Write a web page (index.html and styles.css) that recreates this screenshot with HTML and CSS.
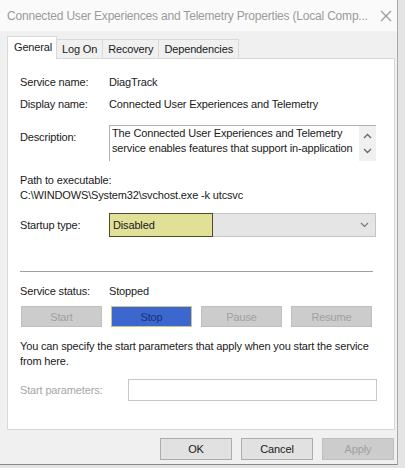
FILE: index.html
```html
<!DOCTYPE html>
<html lang="en">
<head>
  <meta charset="UTF-8">
  <title>Connected User Experiences and Telemetry Properties</title>
  <link rel="stylesheet" href="styles.css">
</head>
<body>
  <div class="window">
    <div class="titlebar">
      <span class="title">Connected User Experiences and Telemetry Properties (Local Comp...</span>
      <span class="close">
        <svg width="12" height="12" viewBox="0 0 12 12"><path d="M1 1L11 11M11 1L1 11" stroke="#9a9a9a" stroke-width="1.2" fill="none"/></svg>
      </span>
    </div>

    <div class="content">
      <div class="tabs">
        <div class="tab active">General</div>
        <div class="tab">Log On</div>
        <div class="tab">Recovery</div>
        <div class="tab">Dependencies</div>
      </div>

      <div class="panel">
        <div class="row first">
          <span class="label">Service name:</span>
          <span>DiagTrack</span>
        </div>
        <div class="row second">
          <span class="label">Display name:</span>
          <span>Connected User Experiences and Telemetry</span>
        </div>
        <div class="row desc-row">
          <span class="label desc-label">Description:</span>
          <div class="desc-box">
            <div class="desc-text">The Connected User Experiences and Telemetry service enables features that support in-application</div>
            <div class="scroll">
              <svg width="9" height="6" viewBox="0 0 9 6"><path d="M1 5L4.5 1.5L8 5" stroke="#666" stroke-width="1.3" fill="none"/></svg>
              <svg width="9" height="6" viewBox="0 0 9 6"><path d="M1 1L4.5 4.5L8 1" stroke="#666" stroke-width="1.3" fill="none"/></svg>
            </div>
          </div>
        </div>

        <div class="path-block">
          <div>Path to executable:</div>
          <div>C:\WINDOWS\System32\svchost.exe -k utcsvc</div>
        </div>

        <div class="row startup-row">
          <span class="label">Startup type:</span>
          <div class="select">
            <span class="select-value">Disabled</span>
            <svg class="chevron" width="9" height="6" viewBox="0 0 9 6"><path d="M1 1L4.5 4.5L8 1" stroke="#777" stroke-width="1.1" fill="none"/></svg>
          </div>
        </div>

        <div class="separator"></div>

        <div class="row status-row">
          <span class="label">Service status:</span>
          <span>Stopped</span>
        </div>

        <div class="service-buttons">
          <button type="button" class="btn disabled">Start</button>
          <button type="button" class="btn stop">Stop</button>
          <button type="button" class="btn disabled">Pause</button>
          <button type="button" class="btn disabled">Resume</button>
        </div>

        <p class="hint">You can specify the start parameters that apply when you start the service from here.</p>

        <div class="row params-row">
          <span class="label params-label">Start parameters:</span>
          <div class="params-input"></div>
        </div>
      </div>

      <div class="footer">
        <button type="button" class="btn dlg">OK</button>
        <button type="button" class="btn dlg">Cancel</button>
        <button type="button" class="btn dlg disabled">Apply</button>
      </div>
    </div>
  </div>
</body>
</html>
```

FILE: styles.css
```css
body {
  margin: 0;
  background-color: #e4e4e4;
  font-family: "Liberation Sans", Arial, sans-serif;
  font-size: 11px;
  letter-spacing: -0.15px;
  color: #1a1a1a;
}
.window {
  width: 398px;
  height: 465px;
  border-right: 1px solid #a8a8a8;
  border-bottom: 1px solid #8a8a8a;
  background-color: #f0f0f0;
  box-sizing: border-box;
}
.titlebar {
  height: 31px;
  background-color: #fafafa;
  display: flex;
  align-items: center;
  justify-content: space-between;
  padding: 0 5px 0 7px;
}
.title {
  color: #9a9a9a;
  font-size: 12px;
  letter-spacing: -0.2px;
  white-space: nowrap;
}
.close {
  display: flex;
}
.content {
  padding: 5px 0 0 7px;
}
.tabs {
  display: flex;
  align-items: flex-end;
  height: 22px;
  position: relative;
  z-index: 1;
}
.tab {
  height: 19px;
  line-height: 19px;
  padding: 0 5px;
  border: 1px solid #d9d9d9;
  border-bottom: none;
  margin-left: -1px;
  background-color: #f0f0f0;
  box-sizing: border-box;
}
.tab.active {
  height: 23px;
  line-height: 20px;
  background-color: #fff;
  margin-left: 0;
  margin-bottom: -1px;
  padding: 0 6px;
  width: 50px;
}
.panel {
  width: 388px;
  height: 372px;
  background-color: #fff;
  border: 1px solid #d9d9d9;
  box-sizing: border-box;
  padding: 15px 0 0 12px;
}
.row {
  display: flex;
  align-items: flex-start;
  line-height: 16px;
}
.label {
  width: 89px;
  flex-shrink: 0;
}
.second {
  margin-top: 6px;
}
.desc-row {
  margin-top: 13px;
}
.desc-label {
  padding-top: 4px;
}
.desc-box {
  width: 267px;
  height: 36px;
  border-top: 1px solid #b0b0b0;
  border-left: 1px solid #b0b0b0;
  display: flex;
  box-sizing: border-box;
  overflow: hidden;
}
.desc-text {
  flex: 1;
  padding: 0 0 0 2px;
  line-height: 15px;
  overflow: hidden;
}
.scroll {
  width: 17px;
  background-color: #f0f0f0;
  display: flex;
  flex-direction: column;
  align-items: center;
  justify-content: space-around;
  padding: 3px 0;
}
.path-block {
  margin-top: 12px;
  line-height: 15px;
}
.startup-row {
  margin-top: 10px;
  align-items: center;
}
.select {
  width: 267px;
  height: 24px;
  background-color: #e5e5e5;
  border: 1px solid #c4c4c4;
  box-sizing: border-box;
  display: flex;
  align-items: center;
  justify-content: space-between;
  padding-right: 6px;
}
.select-value {
  width: 104px;
  height: 24px;
  line-height: 22px;
  margin: -1px 0 0 -1px;
  padding-left: 3px;
  background-color: #e0e097;
  border: 1px solid #4d4d28;
  box-sizing: border-box;
}
.separator {
  width: 353px;
  height: 1px;
  background-color: #a0a0a0;
  margin-top: 34px;
}
.status-row {
  margin-top: 11px;
}
.service-buttons {
  display: flex;
  gap: 9px;
  margin-top: 7px;
  margin-left: 1px;
}
.btn {
  height: 21px;
  width: 81px;
  font-family: "Liberation Sans", Arial, sans-serif;
  font-size: 11px;
  letter-spacing: -0.15px;
  padding: 0;
  border: 1px solid #adadad;
  background-color: #e1e1e1;
  color: #1a1a1a;
}
.btn.disabled {
  background-color: #cccccc;
  border-color: #bfbfbf;
  color: #a0a0a0;
}
.btn.stop {
  background-color: #3b67cf;
  border-color: #c8c48a;
  color: #1c2f7a;
}
.hint {
  margin: 12px 0 0 0;
  line-height: 15px;
  width: 360px;
}
.params-row {
  margin-top: 10px;
  align-items: center;
}
.params-label {
  width: 108px;
  color: #a6a6a6;
}
.params-input {
  width: 249px;
  height: 22px;
  border: 1px solid #c8c8c8;
  box-sizing: border-box;
}
.footer {
  display: flex;
  justify-content: flex-end;
  gap: 9px;
  padding: 8px 1px 0 0;
  width: 388px;
  box-sizing: border-box;
}
.footer .btn {
  width: 72px;
  height: 22px;
}
```
